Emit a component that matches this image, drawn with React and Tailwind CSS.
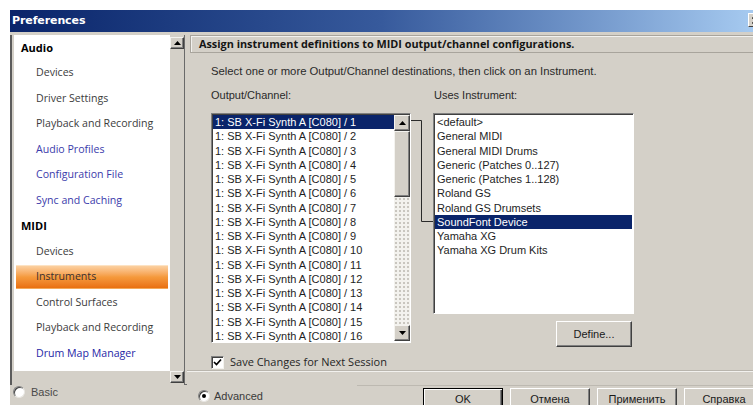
import React from "react";

const treeItems = [
  { label: "Audio", kind: "head" },
  { label: "Devices" },
  { label: "Driver Settings" },
  { label: "Playback and Recording" },
  { label: "Audio Profiles", kind: "link" },
  { label: "Configuration File", kind: "link" },
  { label: "Sync and Caching", kind: "link" },
  { label: "MIDI", kind: "head" },
  { label: "Devices" },
  { label: "Instruments", kind: "active" },
  { label: "Control Surfaces" },
  { label: "Playback and Recording" },
  { label: "Drum Map Manager", kind: "link2" },
];

const channels = Array.from({ length: 16 }, (_, i) => `1: SB X-Fi Synth A [C080] / ${i + 1}`);

const instruments = [
  "<default>",
  "General MIDI",
  "General MIDI Drums",
  "Generic (Patches 0..127)",
  "Generic (Patches 1..128)",
  "Roland GS",
  "Roland GS Drumsets",
  "SoundFont Device",
  "Yamaha XG",
  "Yamaha XG Drum Kits",
];

function Arrow({ up }) {
  return (
    <svg width="7" height="4" viewBox="0 0 7 4" className="block">
      {up ? <path d="M3.5 0 L7 4 L0 4 Z" fill="#000" /> : <path d="M0 0 L7 0 L3.5 4 Z" fill="#000" />}
    </svg>
  );
}

function ScrollButton({ up, className = "" }) {
  return (
    <div
      className={`shrink-0 flex items-center justify-center bg-[#d4d0c8] border border-t-[#f4f3ef] border-l-[#f4f3ef] border-r-[#404040] border-b-[#404040] shadow-[inset_-1px_-1px_0_#808080] ${className}`}
    >
      <Arrow up={up} />
    </div>
  );
}

function TreeRow({ item }) {
  if (item.kind === "head") {
    return (
      <div className="h-[25.5px] flex items-center pl-[7px] font-bold text-[11px] text-black">
        {item.label}
      </div>
    );
  }
  if (item.kind === "active") {
    return (
      <div className="h-[25.5px] flex items-center px-[2px]">
        <div className="w-full h-[24px] flex items-center pl-[20px] text-[#3a3030] bg-linear-to-b from-[#fbd0a0] via-[#f59a3c] to-[#e9700f] border-t border-[#fde3c4] border-b border-b-[#f3a95a]">
          {item.label}
        </div>
      </div>
    );
  }
  const color =
    item.kind === "link" ? "text-[#3b3bab]" : item.kind === "link2" ? "text-[#2626a6]" : "text-[#3c3c3c]";
  return <div className={`h-[25.5px] flex items-center pl-[22px] ${color}`}>{item.label}</div>;
}

function Radio({ checked }) {
  return (
    <div className="w-[12px] h-[12px] shrink-0 rounded-full bg-white border border-t-[#808080] border-l-[#808080] border-r-[#e8e6e2] border-b-[#e8e6e2] flex items-center justify-center shadow-[inset_1px_1px_0_#404040]">
      {checked && <div className="w-[4px] h-[4px] rounded-full bg-black" />}
    </div>
  );
}

function WinButton({ children, isDefault }) {
  return (
    <div
      className={`w-[80px] h-[23px] shrink-0 flex items-center justify-center text-[11px] text-[#1a1a1a] bg-[#d4d0c8] ${
        isDefault
          ? "border border-black shadow-[inset_1px_1px_0_#fff,inset_-1px_-1px_0_#404040,inset_-2px_-2px_0_#808080]"
          : "border border-t-white border-l-white border-r-[#404040] border-b-[#404040] shadow-[inset_-1px_-1px_0_#808080]"
      }`}
    >
      {children}
    </div>
  );
}

export default function App() {
  return (
    <div className="w-[753px] h-[405px] bg-white overflow-hidden font-['Liberation_Sans',Arial,sans-serif] text-[11px]">
      <div className="h-[10px]" />
      <div className="ml-[10px] w-[743px] h-[395px] bg-[#d4d0c8] flex flex-col overflow-hidden">
        {/* title bar */}
        <div className="h-[22px] shrink-0 flex items-center bg-linear-to-r from-[#0a246a] via-[#375a9c] to-[#a6caf0] pl-[2px] relative">
          <span className="font-['DejaVu_Sans',sans-serif] font-bold text-[11px] text-white tracking-[-0.1px]">
            Preferences
          </span>
          <div className="absolute left-[738px] top-[3px] w-[16px] h-[14px] bg-[#d4d0c8] border border-t-white border-l-white border-r-[#404040] border-b-[#404040] flex items-center pl-[3px]">
            <svg width="8" height="7" viewBox="0 0 8 7" className="block">
              <path d="M0.5 0.5 L7 6.5 M7 0.5 L0.5 6.5" stroke="#000" strokeWidth="1.6" />
            </svg>
          </div>
        </div>

        <div className="flex h-[373px] shrink-0">
          {/* navigation tree */}
          <div className="w-[177px] shrink-0 flex flex-col">
            <div className="flex h-[350px] shrink-0 mt-[3px]">
              <div className="border-l-2 border-[#5c5c5c] pl-[2px] flex flex-col">
                <div className="w-[156px] h-[336px] bg-white font-['Open_Sans',sans-serif] text-[10.6px]">
                  {treeItems.map((it, i) => (
                    <TreeRow key={i} item={it} />
                  ))}
                </div>
              </div>
              <div className="w-[17px] flex flex-col items-center border-r border-[#6a6a6a] pt-[2px] pb-[2px]">
                <ScrollButton up className="w-[14px] h-[12px]" />
                <div className="flex-1" />
                <ScrollButton className="w-[14px] h-[12px]" />
              </div>
              <div className="w-[10px] self-end border-b border-[#6a6a6a]" />
            </div>
            <div className="flex items-center gap-[6px] pl-[3px] h-[14px] shrink-0">
              <Radio />
              <span className="text-[#4a4a4a]">Basic</span>
            </div>
          </div>

          {/* instrument page */}
          <div className="flex-1 min-w-0 flex flex-col">
            <div className="h-[338px] shrink-0 flex flex-col pl-[3px]">
              <div className="mt-[3px] h-[18px] shrink-0 flex items-center pl-[8px] bg-[#d4d0c8] border-t border-l border-t-[#a8a49c] border-l-[#a8a49c] border-b border-b-[#a8a49c] shadow-[inset_1px_1px_0_#f2f1ee]">
                <span className="font-['Open_Sans',sans-serif] font-bold text-[10.85px] text-[#151515] whitespace-nowrap">
                  Assign instrument definitions to MIDI output/channel configurations.
                </span>
              </div>

              <div className="pl-[21px] mt-[10px] h-[16px] leading-[16px] text-[11.3px] text-[#2a2a2a] whitespace-nowrap">
                Select one or more Output/Channel destinations, then click on an Instrument.
              </div>

              <div className="pl-[21px] mt-[8px] h-[16px] leading-[16px] flex text-[#2a2a2a]">
                <span className="w-[223px]">Output/Channel:</span>
                <span>Uses Instrument:</span>
              </div>

              <div className="pl-[21px] mt-[10px] flex items-start shrink-0">
                {/* output/channel list */}
                <div className="w-[200px] h-[230px] flex bg-white border border-t-[#808080] border-l-[#808080] border-r-white border-b-white shadow-[inset_1px_1px_0_#404040]">
                  <div className="flex-1 pt-[1px] pl-[1px]">
                    {channels.map((c, i) => (
                      <div
                        key={i}
                        className={`h-[14.25px] leading-[14.25px] pl-[2px] whitespace-nowrap ${
                          i === 0 ? "bg-[#0a246a] text-white" : "text-[#1e1e1e]"
                        }`}
                      >
                        {c}
                      </div>
                    ))}
                  </div>
                  <div className="w-[16px] flex flex-col pt-[1px] pb-[1px]">
                    <ScrollButton up className="h-[16px]" />
                    <div className="h-[66px] shrink-0 bg-[#d4d0c8] border border-t-[#f4f3ef] border-l-[#f4f3ef] border-r-[#404040] border-b-[#404040] shadow-[inset_-1px_-1px_0_#808080]" />
                    <div className="flex-1 bg-[#f3f2ee] bg-[radial-gradient(#c9c6bf_0.8px,transparent_0.9px)] bg-size-[4px_4px]" />
                    <ScrollButton className="h-[16px]" />
                  </div>
                </div>

                {/* link between the selected channel and its instrument */}
                <svg width="22" height="112" viewBox="0 0 22 112" className="block shrink-0">
                  <path d="M0 7.5 H10.5 V108.5 H22" fill="none" stroke="#2a2a2a" strokeWidth="1" />
                </svg>

                <div className="flex flex-col items-end">
                  <div className="w-[201px] h-[201px] bg-white border border-t-[#808080] border-l-[#808080] border-r-white border-b-white shadow-[inset_1px_1px_0_#404040] pt-[1px] pl-[1px] pr-[1px]">
                    {instruments.map((n, i) => (
                      <div
                        key={i}
                        className={`h-[14.25px] leading-[14.25px] pl-[2px] whitespace-nowrap ${
                          i === 7 ? "bg-[#0a246a] text-white" : "text-[#1e1e1e]"
                        }`}
                      >
                        {n}
                      </div>
                    ))}
                  </div>
                  <div className="mt-[7px] mr-[2px] w-[76px] h-[26px] flex items-center justify-center text-[#1a1a1a] bg-[#d4d0c8] border border-t-white border-l-white border-r-[#404040] border-b-[#404040] shadow-[inset_-1px_-1px_0_#808080]">
                    Define...
                  </div>
                </div>
              </div>

              <div className="pl-[21px] mt-[8px] flex items-center gap-[6px] h-[14px] shrink-0">
                <div className="w-[13px] h-[13px] bg-white border border-t-[#808080] border-l-[#808080] border-r-[#f4f3ef] border-b-[#f4f3ef] shadow-[inset_1px_1px_0_#404040] flex items-center justify-center">
                  <svg width="9" height="9" viewBox="0 0 9 9" className="block">
                    <path d="M1 4 L3.5 6.5 L8 1.5" fill="none" stroke="#000" strokeWidth="1.7" />
                  </svg>
                </div>
                <span className="font-['Open_Sans',sans-serif] text-[11px] text-[#262626]">
                  Save Changes for Next Session
                </span>
              </div>
            </div>

            <div className="h-[2px] shrink-0 border-t border-[#b9b5ad] border-b border-b-[#f2f1ee]" />

            <div className="flex-1 min-h-0 overflow-hidden flex items-start relative">
              <div className="absolute left-[170px] right-0 top-[13px] h-px bg-[#bdb9b1]" />
              <div className="w-[236px] shrink-0 pl-[11px] pt-[16px] flex items-center gap-[4px]">
                <Radio checked />
                <span className="text-[#3a3a3a]">Advanced</span>
              </div>
              <div className="pt-[16px] flex gap-[7px] relative">
                <WinButton isDefault>OK</WinButton>
                <WinButton>Отмена</WinButton>
                <WinButton>Применить</WinButton>
                <WinButton>Справка</WinButton>
              </div>
            </div>
          </div>
        </div>
      </div>
    </div>
  );
}
